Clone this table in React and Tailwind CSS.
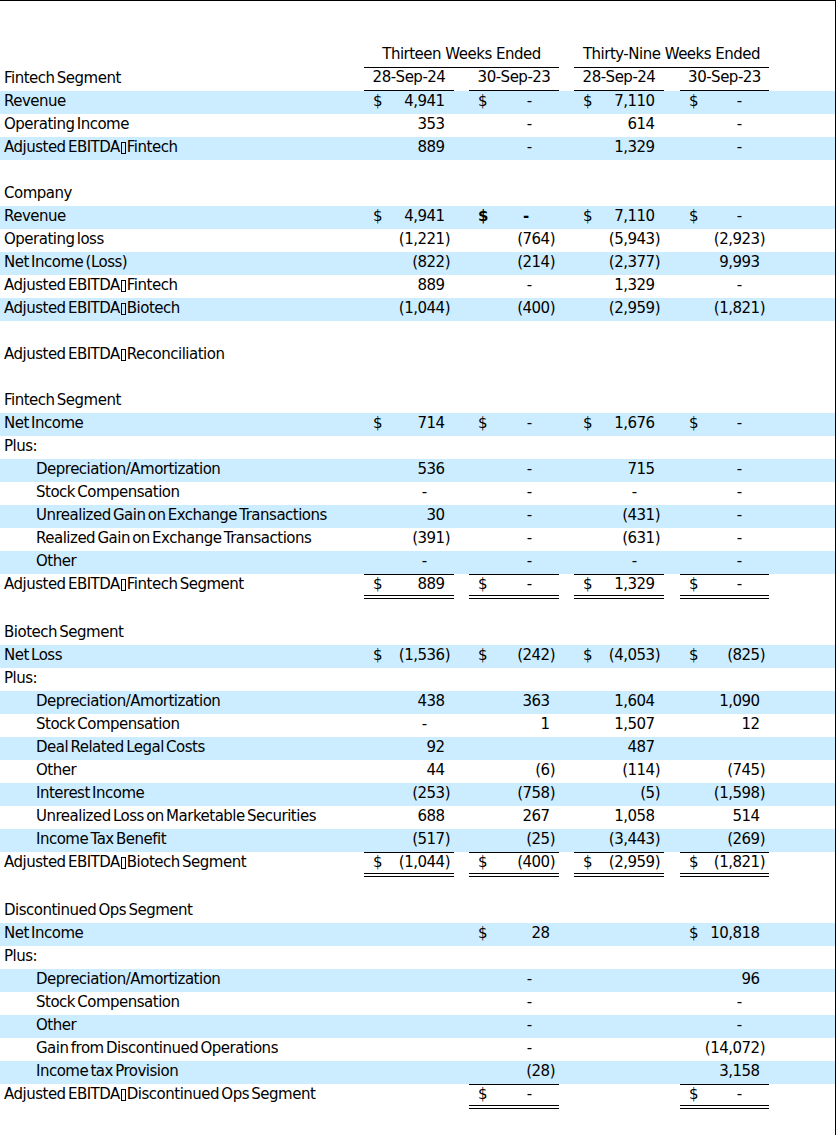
import React from "react";

const COLS = "grid-cols-[364px_90px_15px_90px_15px_90px_16px_89px]";

const rows = [
  { label: "Revenue", band: true, v: ["$4,941", "$-", "$7,110", "$-"] },
  { label: "Operating Income", v: ["353", "-", "614", "-"] },
  { label: ["Adjusted EBITDA", "Fintech"], band: true, v: ["889", "-", "1,329", "-"] },
  { blank: true },
  { label: "Company" },
  { label: "Revenue", band: true, v: ["$4,941", "$-", "$7,110", "$-"], boldCol: 1 },
  { label: "Operating loss", v: ["(1,221)", "(764)", "(5,943)", "(2,923)"] },
  { label: "Net Income (Loss)", band: true, v: ["(822)", "(214)", "(2,377)", "9,993"] },
  { label: ["Adjusted EBITDA", "Fintech"], v: ["889", "-", "1,329", "-"] },
  { label: ["Adjusted EBITDA", "Biotech"], band: true, v: ["(1,044)", "(400)", "(2,959)", "(1,821)"] },
  { blank: true },
  { label: ["Adjusted EBITDA", "Reconciliation"] },
  { blank: true },
  { label: "Fintech Segment" },
  { label: "Net Income", band: true, v: ["$714", "$-", "$1,676", "$-"] },
  { label: "Plus:" },
  { label: "Depreciation/Amortization", indent: true, band: true, v: ["536", "-", "715", "-"] },
  { label: "Stock Compensation", indent: true, v: ["-", "-", "-", "-"] },
  { label: "Unrealized Gain on Exchange Transactions", indent: true, band: true, v: ["30", "-", "(431)", "-"] },
  { label: "Realized Gain on Exchange Transactions", indent: true, v: ["(391)", "-", "(631)", "-"] },
  { label: "Other", indent: true, band: true, v: ["-", "-", "-", "-"] },
  { label: ["Adjusted EBITDA", "Fintech Segment"], total: true, v: ["$889", "$-", "$1,329", "$-"] },
  { blank: true },
  { label: "Biotech Segment" },
  { label: "Net Loss", band: true, v: ["$(1,536)", "$(242)", "$(4,053)", "$(825)"] },
  { label: "Plus:" },
  { label: "Depreciation/Amortization", indent: true, band: true, v: ["438", "363", "1,604", "1,090"] },
  { label: "Stock Compensation", indent: true, v: ["-", "1", "1,507", "12"] },
  { label: "Deal Related Legal Costs", indent: true, band: true, v: ["92", "", "487", ""] },
  { label: "Other", indent: true, v: ["44", "(6)", "(114)", "(745)"] },
  { label: "Interest Income", indent: true, band: true, v: ["(253)", "(758)", "(5)", "(1,598)"] },
  { label: "Unrealized Loss on Marketable Securities", indent: true, v: ["688", "267", "1,058", "514"] },
  { label: "Income Tax Benefit", indent: true, band: true, v: ["(517)", "(25)", "(3,443)", "(269)"] },
  { label: ["Adjusted EBITDA", "Biotech Segment"], total: true, v: ["$(1,044)", "$(400)", "$(2,959)", "$(1,821)"] },
  { blank: true },
  { label: "Discontinued Ops Segment" },
  { label: "Net Income", band: true, v: ["", "$28", "", "$10,818"] },
  { label: "Plus:" },
  { label: "Depreciation/Amortization", indent: true, band: true, v: ["", "-", "", "96"] },
  { label: "Stock Compensation", indent: true, v: ["", "-", "", "-"] },
  { label: "Other", indent: true, band: true, v: ["", "-", "", "-"] },
  { label: "Gain from Discontinued Operations", indent: true, v: ["", "-", "", "(14,072)"] },
  { label: "Income tax Provision", indent: true, band: true, v: ["", "(28)", "", "3,158"] },
  { label: ["Adjusted EBITDA", "Discontinued Ops Segment"], total: true, v: ["", "$-", "", "$-"] },
];

// missing-glyph box between "EBITDA" and the segment name
function Tofu() {
  return <span className="inline-block w-[5px] h-[12px] border border-black align-[-2px] mx-[1px]" />;
}

function Label({ text }) {
  if (Array.isArray(text)) {
    return (
      <span>
        {text[0]}
        <Tofu />
        {text[1]}
      </span>
    );
  }
  return <span>{text}</span>;
}

function Amount({ raw, bold }) {
  if (!raw) return null;
  const dollar = raw.startsWith("$");
  const body = dollar ? raw.slice(1) : raw;
  let inner;
  if (body === "-") {
    inner = (
      <span>
        -<span className="invisible">00)</span>
      </span>
    );
  } else if (body.startsWith("(")) {
    inner = <span>{body}</span>;
  } else {
    inner = (
      <span>
        {body}
        <span className="invisible">)</span>
      </span>
    );
  }
  return (
    <div className={`flex justify-between pl-[9px] pr-[4px] ${bold ? "font-bold" : ""}`}>
      <span>{dollar ? "$" : ""}</span>
      {inner}
    </div>
  );
}

function Row({ row }) {
  if (row.blank) return <div className="h-[23px]" />;
  const cellCls = row.total
    ? "h-[25px] flex items-center border-t border-b-4"
    : "h-[23px] flex items-center pb-[3px]";
  const lineStyle = row.total ? { borderTopStyle: "solid", borderBottomStyle: "double" } : undefined;
  const v = row.v || ["", "", "", ""];
  const valCell = (i) => {
    const hasLine = row.total && v[i] !== "";
    return (
      <div className={`${cellCls} ${hasLine ? "border-black" : "border-transparent"}`} style={lineStyle}>
        <div className={`w-full ${row.total ? "pb-[1px]" : ""}`}>
          <Amount raw={v[i]} bold={row.boldCol === i} />
        </div>
      </div>
    );
  };
  return (
    <div className={`grid ${COLS} ${row.band ? "bg-[#ccecff]" : ""}`}>
      <div
        className={`${cellCls} border-transparent ${row.indent ? "pl-[36px]" : "pl-[4px]"}`}
        style={lineStyle}
      >
        <div className={row.total ? "pb-[1px]" : ""}>
          <Label text={row.label} />
        </div>
      </div>
      {valCell(0)}
      <div />
      {valCell(1)}
      <div />
      {valCell(2)}
      <div />
      {valCell(3)}
    </div>
  );
}

export default function App() {
  return (
    <div className="w-[836px] min-h-[1135px] bg-white border-t border-r border-black text-black font-['DejaVu_Sans',sans-serif] text-[15px] tracking-[-0.5px] [word-spacing:-2px]">
      <div className="h-[44px]" />
      {/* period headers */}
      <div className={`grid ${COLS}`}>
        <div />
        <div className="col-span-3 h-[23px] flex items-center justify-center pb-[3px] border-b border-black [word-spacing:0px]">
          Thirteen Weeks Ended
        </div>
        <div />
        <div className="col-span-3 h-[23px] flex items-center justify-center pb-[3px] border-b border-black [word-spacing:0px]">
          Thirty-Nine Weeks Ended
        </div>
      </div>
      <div className={`grid ${COLS}`}>
        <div className="h-[23px] flex items-center pb-[3px] pl-[4px]">Fintech Segment</div>
        <div className="h-[23px] flex items-center justify-center pb-[3px] border-b border-black">28-Sep-24</div>
        <div />
        <div className="h-[23px] flex items-center justify-center pb-[3px] border-b border-black">30-Sep-23</div>
        <div />
        <div className="h-[23px] flex items-center justify-center pb-[3px] border-b border-black">28-Sep-24</div>
        <div />
        <div className="h-[23px] flex items-center justify-center pb-[3px] border-b border-black">30-Sep-23</div>
      </div>
      {rows.map((r, i) => (
        <Row key={i} row={r} />
      ))}
    </div>
  );
}
